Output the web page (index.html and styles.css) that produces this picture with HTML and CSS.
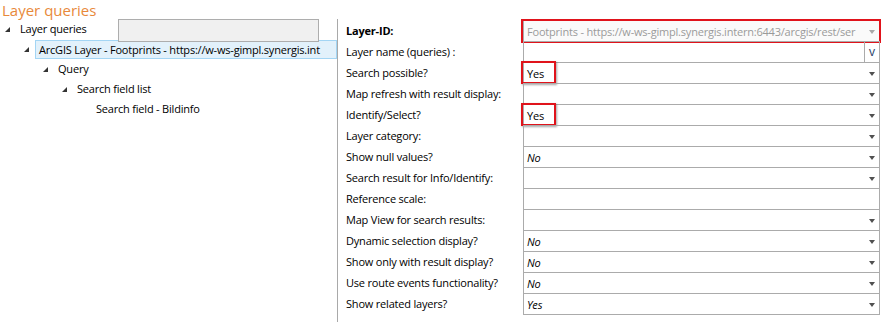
FILE: index.html
```html
<!DOCTYPE html>
<html>
<head>
<meta charset="utf-8">
<link rel="stylesheet" href="styles.css">
</head>
<body>
<div class="title">Layer queries</div>
<div class="main">
  <div class="tree">
    <div class="ghost-box"></div>
    <div class="node"><span class="indent" style="width:0px"></span><span class="exp"><i></i></span><span class="label">Layer queries</span></div>
    <div class="node"><span class="indent" style="width:19px"></span><span class="exp"><i></i></span><span class="label sel">ArcGIS Layer - Footprints - https://w-ws-gimpl.synergis.int</span></div>
    <div class="node"><span class="indent" style="width:38px"></span><span class="exp"><i></i></span><span class="label">Query</span></div>
    <div class="node"><span class="indent" style="width:57px"></span><span class="exp"><i></i></span><span class="label">Search field list</span></div>
    <div class="node"><span class="indent" style="width:76px"></span><span class="exp"></span><span class="label">Search field - Bildinfo</span></div>
  </div>
  <div class="props">
    <div class="plabel bold">Layer-ID:</div>
    <div class="pval red-field disabled"><span class="txt">Footprints - https://w-ws-gimpl.synergis.intern:6443/arcgis/rest/ser</span><span class="arrow"></span></div>

    <div class="plabel">Layer name (queries) :</div>
    <div class="pval"><span class="txt"></span><span class="vbtn">v</span></div>

    <div class="plabel">Search possible?</div>
    <div class="pval"><span class="txt">Yes</span><span class="redbox"></span><span class="arrow"></span></div>

    <div class="plabel">Map refresh with result display:</div>
    <div class="pval"><span class="txt"></span><span class="arrow"></span></div>

    <div class="plabel">Identify/Select?</div>
    <div class="pval"><span class="txt">Yes</span><span class="redbox"></span><span class="arrow"></span></div>

    <div class="plabel">Layer category:</div>
    <div class="pval"><span class="txt"></span><span class="arrow"></span></div>

    <div class="plabel">Show null values?</div>
    <div class="pval"><span class="txt it">No</span><span class="arrow"></span></div>

    <div class="plabel">Search result for Info/Identify:</div>
    <div class="pval"><span class="txt"></span><span class="arrow"></span></div>

    <div class="plabel">Reference scale:</div>
    <div class="pval"><span class="txt"></span></div>

    <div class="plabel">Map View for search results:</div>
    <div class="pval"><span class="txt"></span><span class="arrow"></span></div>

    <div class="plabel">Dynamic selection display?</div>
    <div class="pval"><span class="txt it">No</span><span class="arrow"></span></div>

    <div class="plabel">Show only with result display?</div>
    <div class="pval"><span class="txt it">No</span><span class="arrow"></span></div>

    <div class="plabel">Use route events functionality?</div>
    <div class="pval"><span class="txt it">No</span><span class="arrow"></span></div>

    <div class="plabel">Show related layers?</div>
    <div class="pval last"><span class="txt it">Yes</span><span class="arrow"></span></div>
  </div>
</div>
</body>
</html>
```

FILE: styles.css
```css
html, body {
  margin: 0;
  padding: 0;
  background: #ffffff;
}
body {
  font-family: "Open Sans", "Noto Sans", sans-serif;
  font-size: 11px;
  letter-spacing: -0.2px;
  color: #000;
  width: 882px;
  height: 322px;
  overflow: hidden;
}
.title {
  height: 19px;
  line-height: 20px;
  font-size: 15px;
  letter-spacing: 0;
  color: #e8893a;
  padding-left: 2px;
}
.main {
  display: flex;
  height: 303px;
}
.tree {
  position: relative;
  width: 337px;
  border-right: 1px solid #a9a9a9;
  box-sizing: content-box;
}
.ghost-box {
  position: absolute;
  left: 118px;
  top: 0;
  width: 199px;
  height: 21px;
  background: #f0f0f0;
  border: 1px solid #adadad;
}
.node {
  display: flex;
  height: 20px;
  align-items: stretch;
}
.indent {
  flex: none;
}
.exp {
  flex: none;
  width: 16px;
  position: relative;
}
.exp i {
  position: absolute;
  left: 5px;
  top: 8px;
  width: 0;
  height: 0;
  border-left: 5px solid transparent;
  border-bottom: 5px solid #333333;
}
.label {
  flex: 1;
  padding-left: 4px;
  line-height: 20px;
  white-space: nowrap;
}
.label.sel {
  padding-left: 3px;
  margin-top: 1px;
  line-height: 17px;
  height: 17px;
  background: #e2f1fb;
  border: 1px solid #a3d5f4;
}
.props {
  display: grid;
  grid-template-columns: 185px 357px;
  grid-auto-rows: 21px;
  padding-top: 1px;
  align-content: start;
}
.plabel {
  padding-left: 8px;
  line-height: 21px;
  white-space: nowrap;
}
.bold {
  font-weight: bold;
}
.pval {
  position: relative;
  display: flex;
  align-items: center;
  border: 1px solid #ababab;
  border-bottom: none;
  box-sizing: border-box;
  height: 21px;
}
.pval.last {
  height: 22px;
  border-bottom: 1px solid #ababab;
}
.txt {
  flex: 1;
  padding-left: 3px;
  white-space: nowrap;
  overflow: hidden;
}
.it {
  font-style: italic;
}
.arrow {
  flex: none;
  width: 0;
  height: 0;
  border-left: 3px solid transparent;
  border-right: 3px solid transparent;
  border-top: 4px solid #505050;
  margin-right: 4px;
  margin-left: 6px;
  margin-top: 1px;
}
.disabled {
  background: #fafafa;
}
.disabled .txt {
  color: #9a9a9a;
}
.disabled .arrow {
  border-top-color: #a8a8a8;
}
.red-field::after {
  content: "";
  position: absolute;
  left: -3px;
  top: -2px;
  right: -2px;
  bottom: -2px;
  border: 2px solid #e0131b;
  pointer-events: none;
}
.redbox {
  position: absolute;
  left: -3px;
  top: -2px;
  width: 31px;
  height: 19px;
  border: 2px solid #e0131b;
  box-shadow: 1px 1px 2px rgba(0, 0, 0, 0.35);
}
.vbtn {
  flex: none;
  width: 14px;
  height: 20px;
  border-left: 1px solid #ababab;
  text-align: center;
  line-height: 19px;
  color: #1d3a66;
  font-size: 12px;
}
```
